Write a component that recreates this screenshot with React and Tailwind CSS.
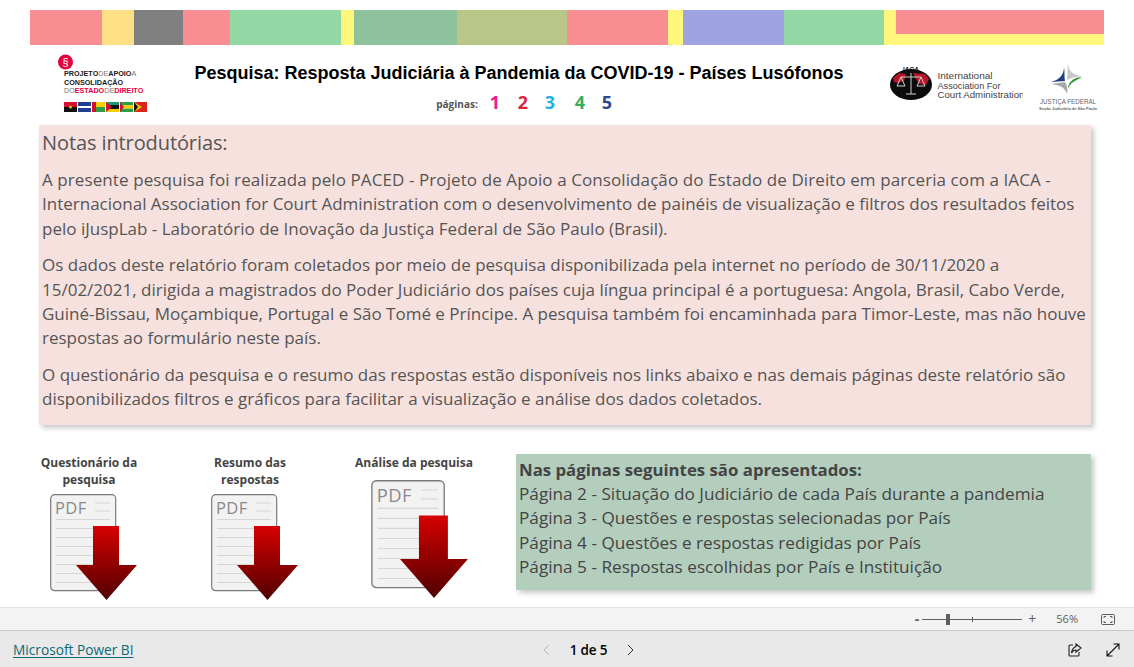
import React from "react";

const segs = [
  ["w-[72px]", "bg-[#f98e92]"],
  ["w-[32px]", "bg-[#fde084]"],
  ["w-[49px]", "bg-[#808080]"],
  ["w-[47px]", "bg-[#f98e92]"],
  ["w-[111px]", "bg-[#94d8a6]"],
  ["w-[13px]", "bg-[#fff67c]"],
  ["w-[103px]", "bg-[#8dc29d]"],
  ["w-[111px]", "bg-[#b8c688]"],
  ["w-[101px]", "bg-[#f98e92]"],
  ["w-[15px]", "bg-[#fff67c]"],
  ["w-[101px]", "bg-[#a0a3e2]"],
  ["w-[100px]", "bg-[#94d8a6]"],
];

function PdfIcon({ id, className }) {
  return (
    <svg viewBox="0 0 87 106" className={className}>
      <defs>
        <linearGradient id={id} x1="0" y1="0" x2="0" y2="1">
          <stop offset="0" stopColor="#d70000" />
          <stop offset="1" stopColor="#4f0000" />
        </linearGradient>
      </defs>
      <rect x="0.7" y="0.7" width="65" height="96" rx="4" fill="#f2f2f2" stroke="#7a7a7a" strokeWidth="1.2" />
      <text x="5" y="20" fontSize="16.500" fill="#8a8a8a" fontFamily="'Open Sans', sans-serif" letterSpacing="0.4">PDF</text>
      <g stroke="#d6d6d6" strokeWidth="1">
        <path d="M45 9H60M45 17H60" />
        <path d="M6 25.500H60M6 34.500H60M6 43.500H60M6 52.500H60M6 61.500H60M6 70.500H60M6 79.500H60M6 88.500H60" />
      </g>
      <path d="M43 32H69V71H87L56.500 106L26 71H43Z" fill={`url(#${id})`} />
    </svg>
  );
}

function Flags() {
  return (
    <g transform="translate(0 -5)">
      <rect x="0" y="47" width="13" height="5" fill="#d2122e" />
      <rect x="0" y="52" width="13" height="5" fill="#111" />
      <circle cx="6.500" cy="52" r="1.500" fill="#f5c400" />
      <rect x="14" y="47" width="13" height="10" fill="#1f3f8f" />
      <rect x="14" y="51" width="13" height="2" fill="#fff" />
      <rect x="28" y="47" width="4" height="10" fill="#ce1126" />
      <rect x="32" y="47" width="9" height="5" fill="#f5d000" />
      <rect x="32" y="52" width="9" height="5" fill="#2f9e44" />
      <rect x="42" y="47" width="13" height="3" fill="#1a9a6b" />
      <rect x="42" y="50" width="13" height="4" fill="#111" />
      <rect x="42" y="54" width="13" height="3" fill="#f5d000" />
      <path d="M42 47L48 52L42 57Z" fill="#d21034" />
      <rect x="56" y="47" width="13" height="3.300" fill="#2f9e44" />
      <rect x="56" y="50.300" width="13" height="3.400" fill="#f5d000" />
      <rect x="56" y="53.700" width="13" height="3.300" fill="#2f9e44" />
      <path d="M56 47L60 52L56 57Z" fill="#d21034" />
      <rect x="70" y="47" width="13" height="10" fill="#dc241f" />
      <path d="M70 47L78 52L70 57Z" fill="#f5c400" />
      <path d="M70 47L74 52L70 57Z" fill="#111" />
    </g>
  );
}

function PacedLogo() {
  return (
    <svg viewBox="-6 -10 95 67" className="w-[95px] h-[67px] ml-[58px] mt-[5px] shrink-0">
      <circle cx="1.500" cy="2" r="7.500" fill="#e4003a" />
      <text x="1.500" y="6" fontSize="11" fill="#fff" textAnchor="middle" fontFamily="'Liberation Sans', sans-serif">§</text>
      <g fontFamily="'Liberation Sans', sans-serif" fontSize="7.200" fill="#1a1a1a" fontWeight="700">
        <text x="0" y="16">PROJETO<tspan fontWeight="400" fill="#777">DE</tspan>APOIO<tspan fontWeight="400" fill="#777">A</tspan></text>
        <text x="0" y="24.500">CONSOLIDAÇÃO</text>
        <text x="0" y="32.500"><tspan fontWeight="400" fill="#777">DO</tspan><tspan fill="#e4003a">ESTADO</tspan><tspan fontWeight="400" fill="#777">DE</tspan><tspan fill="#e4003a">DIREITO</tspan></text>
      </g>
      <Flags />
    </svg>
  );
}

function IacaLogo() {
  return (
    <svg viewBox="0 0 134 42" className="w-[134px] h-[42px] mt-[16px] ml-[4px] shrink-0">
      <ellipse cx="22" cy="23.500" rx="21" ry="15.500" fill="#0b0b0b" />
      <path d="M4 17L10 12L17 13L15 20L9 22L5 21ZM24 12L36 13L40 18L37 24L30 23L27 18Z" fill="#b5162a" />
      <text x="22" y="10.500" fontSize="6.500" fontWeight="700" textAnchor="middle" fill="#111" fontFamily="'Liberation Sans', sans-serif">IACA</text>
      <g stroke="#cfcfcf" strokeWidth="1" fill="none">
        <path d="M22 12V33M12 16H32M17 33H27M12 16L8 25H16ZM32 16L28 25H36Z" />
      </g>
      <g fontFamily="'Liberation Sans', sans-serif" fontSize="9.500" fill="#444">
        <text x="48.500" y="17.500" textLength="55" lengthAdjust="spacingAndGlyphs">International</text>
        <text x="48.500" y="27.500" textLength="63" lengthAdjust="spacingAndGlyphs">Association For</text>
        <text x="48.500" y="37" textLength="87" lengthAdjust="spacingAndGlyphs">Court Administration</text>
      </g>
    </svg>
  );
}

function JfLogo() {
  return (
    <svg viewBox="0 0 62 56" className="w-[62px] h-[56px] ml-[14px] mt-[12px] shrink-0">
      <path d="M31 5C31 13 35 18 45 19C38 20 33 21 30 23C31 17 30 11 31 5Z" fill="#c9c9c9" />
      <path d="M27 10C27 18 22 23 14 25L28 24C27 20 28 15 27 10Z" fill="#24407f" />
      <path d="M45 20C38 20 31 24 31 32C33 26 38 24 45 20Z" fill="#3c9a3e" />
      <path d="M14 27C22 28 28 30 30 37C31 32 30 28 28 25C24 26 18 26 14 27Z" fill="#a8a8a8" />
      <text x="31" y="47" fontSize="6.600" textAnchor="middle" fill="#666" fontFamily="'Liberation Sans', sans-serif" textLength="56" lengthAdjust="spacingAndGlyphs">JUSTIÇA FEDERAL</text>
      <text x="31" y="53" fontSize="4" fontWeight="700" textAnchor="middle" fill="#666" fontFamily="'Liberation Sans', sans-serif" textLength="58" lengthAdjust="spacingAndGlyphs">Seção Judiciária de São Paulo</text>
    </svg>
  );
}

export default function App() {
  return (
    <div className="w-[1134px] h-[667px] overflow-hidden flex flex-col bg-white font-['Open_Sans',sans-serif]">
      <div className="h-[607px] overflow-hidden shrink-0 pt-[10px]">
        <div className="ml-[30px] w-[1074px] h-[35px] flex">
          {segs.map(([w, c], i) => (
            <div key={i} className={`${w} ${c} h-full`} />
          ))}
          <div className="w-[220px] h-full bg-[#fff67c] pl-[12px]">
            <div className="h-[24px] bg-[#f98e92]" />
          </div>
        </div>

        <div className="h-[80px] flex">
          <PacedLogo />
          <div className="w-[732px] flex flex-col items-center">
            <h1 className="mt-[17px] text-[18px] leading-[22px] font-bold text-black font-['Liberation_Sans',sans-serif] whitespace-nowrap">
              Pesquisa: Resposta Judiciária à Pandemia da COVID-19 - Países Lusófonos
            </h1>
            <div className="mt-[6px] h-[24px] flex items-center ml-[12px]">
              <span className="text-[10px] font-bold text-[#555] mr-[12px] mt-[4px]">páginas:</span>
              <span className="w-[28px] text-[18px] font-bold text-[#ee1a8e]">1</span>
              <span className="w-[27px] text-[18px] font-bold text-[#d9253f]">2</span>
              <span className="w-[30px] text-[18px] font-bold text-[#1fb0e6]">3</span>
              <span className="w-[27px] text-[18px] font-bold text-[#35ad5f]">4</span>
              <span className="w-[12px] text-[18px] font-bold text-[#2d4a8f]">5</span>
            </div>
          </div>
          <IacaLogo />
          <JfLogo />
        </div>

        <div className="ml-[39px] w-[1052px] h-[300px] bg-[#f6e1df] shadow-[3px_3px_5px_rgba(0,0,0,0.22)] pl-[3px] pt-[3px] text-[#555] text-[17px] leading-[24.4px] whitespace-nowrap">
          <h2 className="text-[20px] leading-[30px] font-normal tracking-[-0.1px]">Notas introdutórias:</h2>
          <p className="mt-[10px]">
            <span className="tracking-[0.09px]">A presente pesquisa foi realizada pelo PACED - Projeto de Apoio a Consolidação do Estado de Direito em parceria com a IACA -</span><br />
            Internacional Association for Court Administration com o desenvolvimento de painéis de visualização e filtros dos resultados feitos<br />
            pelo iJuspLab - Laboratório de Inovação da Justiça Federal de São Paulo (Brasil).
          </p>
          <p className="mt-[12px]">
            Os dados deste relatório foram coletados por meio de pesquisa disponibilizada pela internet no período de 30/11/2020 a<br />
            15/02/2021, dirigida a magistrados do Poder Judiciário dos países cuja língua principal é a portuguesa: Angola, Brasil, Cabo Verde,<br />
            Guiné-Bissau, Moçambique, Portugal e São Tomé e Príncipe. A pesquisa também foi encaminhada para Timor-Leste, mas não houve<br />
            respostas ao formulário neste país.
          </p>
          <p className="mt-[12px]">
            O questionário da pesquisa e o resumo das respostas estão disponíveis nos links abaixo e nas demais páginas deste relatório são<br />
            disponibilizados filtros e gráficos para facilitar a visualização e análise dos dados coletados.
          </p>
        </div>

        <div className="mt-[29px] ml-[39px] flex items-start">
          <div className="w-[100px] shrink-0">
            <div className="text-[12px] leading-[17px] font-bold text-[#444] text-center">Questionário da<br />pesquisa</div>
            <PdfIcon id="g1" className="w-[87px] h-[106px] ml-[11px] mt-[6px]" />
          </div>
          <div className="w-[100px] ml-[61px] shrink-0">
            <div className="text-[12px] leading-[17px] font-bold text-[#444] text-center">Resumo das<br />respostas</div>
            <PdfIcon id="g2" className="w-[87px] h-[106px] ml-[11px] mt-[6px]" />
          </div>
          <div className="w-[118px] ml-[55px] shrink-0">
            <div className="text-[12px] leading-[17px] font-bold text-[#444] text-center whitespace-nowrap">Análise da pesquisa</div>
            <PdfIcon id="g3" className="w-[97px] h-[118px] ml-[16px] mt-[9px]" />
          </div>
          <div className="w-[575px] h-[136px] ml-[43px] bg-[#b4cebd] shadow-[3px_3px_5px_rgba(0,0,0,0.22)] pl-[3px] pt-[4px] text-[#444] text-[17.2px] leading-[24.2px] whitespace-nowrap">
            <div className="font-bold text-[16.8px]">Nas páginas seguintes são apresentados:</div>
            <div>Página 2 - Situação do Judiciário de cada País durante a pandemia</div>
            <div>Página 3 - Questões e respostas selecionadas por País</div>
            <div>Página 4 - Questões e respostas redigidas por País</div>
            <div>Página 5 - Respostas escolhidas por País e Instituição</div>
          </div>
        </div>
      </div>

      <div className="h-[24px] shrink-0 bg-[#f3f3f3] border-t border-b border-t-[#e3e3e3] border-b-[#c8c8c8] flex items-center justify-end text-[#605e5c]">
        <span className="text-[14px] font-bold leading-none mr-[3px]">-</span>
        <div className="relative w-[100px] h-[1px] bg-[#605e5c] mr-[6px]">
          <div className="absolute left-[24px] -top-[5px] w-[4px] h-[11px] bg-[#605e5c]" />
          <div className="absolute left-[50px] -top-[2px] w-[1px] h-[5px] bg-[#605e5c]" />
        </div>
        <span className="text-[14px] leading-none mr-[20px]">+</span>
        <span className="text-[11px] mr-[23px]">56%</span>
        <svg viewBox="0 0 14 11" className="w-[14px] h-[11px] mr-[19px]" fill="none" stroke="#605e5c">
          <rect x="0.500" y="0.500" width="13" height="10" rx="1" />
          <path d="M3 4V2.500H5M9 2.500H11V4M11 7V8.500H9M5 8.500H3V7" />
        </svg>
      </div>

      <div className="flex-1 bg-[#e9e9e9] flex items-center pl-[13px] pr-[14px] pt-[2px]">
        <a className="text-[13.7px] leading-[20px] text-[#0b6a76] underline underline-offset-2 w-[529px]">Microsoft Power BI</a>
        <div className="flex items-center text-black">
          <svg viewBox="0 0 8 12" className="w-[8px] h-[12px]" fill="none" stroke="#b5b5b5"><path d="M7 1L2 6L7 11" /></svg>
          <span className="text-[13.5px] font-semibold w-[77px] text-center tracking-[-0.2px]">1 de 5</span>
          <svg viewBox="0 0 8 12" className="w-[8px] h-[12px]" fill="none" stroke="#333"><path d="M1 1L6 6L1 11" /></svg>
        </div>
        <div className="ml-auto flex justify-end items-center gap-[24px]">
          <svg viewBox="0 0 14 14" className="w-[14px] h-[14px]" fill="none" stroke="#222" strokeWidth="1.100">
            <path d="M5 2H2Q1 2 1 3V12Q1 13 2 13H10Q11 13 11 12V9" />
            <path d="M8 1L13 5L8 9V7Q5 7 3.500 10Q4 5 8 3.500Z" />
          </svg>
          <svg viewBox="0 0 14 14" className="w-[14px] h-[14px]" fill="none" stroke="#111" strokeWidth="1.100">
            <path d="M1 13L13 1M7.500 1H13V6.500M1 7.500V13H6.500" />
          </svg>
        </div>
      </div>
    </div>
  );
}
